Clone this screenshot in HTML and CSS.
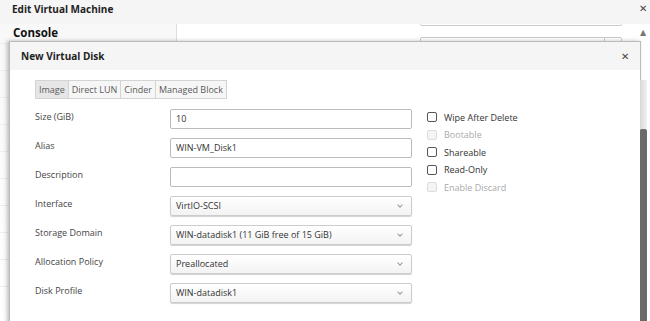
FILE: index.html
```html
<!DOCTYPE html>
<html lang="en">

<head>
    <meta charset="UTF-8">
    <title>New Virtual Disk</title>
    <link rel="stylesheet" href="styles.css">
</head>

<body>
    <div class="vm-dialog">
        <div class="vm-header">
            <span class="vm-title">Edit Virtual Machine</span>
            <span class="close">&#x2715;</span>
        </div>
        <div class="vm-body">
            <div class="vm-nav">
                <div class="nav-item">Console</div>
                <div class="nav-row"></div>
                <div class="nav-row"></div>
                <div class="nav-row"></div>
                <div class="nav-row"></div>
                <div class="nav-row"></div>
                <div class="nav-row"></div>
                <div class="nav-row"></div>
                <div class="nav-row"></div>
                <div class="nav-row"></div>
            </div>
            <div class="vm-content">
                <div class="bg-field"></div>
                <div class="bg-select"><span class="bg-btn"></span></div>
            </div>
            <div class="scrollbar">
                <span class="scroll-arrow">&#x25B2;</span>
                <div class="scroll-track"></div>
                <div class="scroll-thumb"></div>
            </div>
        </div>
    </div>

    <!-- dialog on top -->
    <div class="disk-dialog">
        <div class="disk-header">
            <span class="disk-title">New Virtual Disk</span>
            <span class="close">&#x2715;</span>
        </div>
        <div class="disk-body">
            <div class="tabs">
                <span class="tab active">Image</span>
                <span class="tab">Direct LUN</span>
                <span class="tab">Cinder</span>
                <span class="tab">Managed Block</span>
            </div>
            <div class="form">
                <div class="fields">
                    <div class="row">
                        <label>Size (GiB)</label>
                        <div class="input">10</div>
                    </div>
                    <div class="row">
                        <label>Alias</label>
                        <div class="input">WIN-VM_Disk1</div>
                    </div>
                    <div class="row">
                        <label>Description</label>
                        <div class="input"></div>
                    </div>
                    <div class="row">
                        <label>Interface</label>
                        <div class="select">VirtIO-SCSI<span class="chev"></span></div>
                    </div>
                    <div class="row">
                        <label>Storage Domain</label>
                        <div class="select">WIN-datadisk1 (11 GiB free of 15 GiB)<span class="chev"></span></div>
                    </div>
                    <div class="row">
                        <label>Allocation Policy</label>
                        <div class="select">Preallocated<span class="chev"></span></div>
                    </div>
                    <div class="row">
                        <label>Disk Profile</label>
                        <div class="select">WIN-datadisk1<span class="chev"></span></div>
                    </div>
                </div>
                <div class="checks">
                    <div class="check"><span class="box"></span>Wipe After Delete</div>
                    <div class="check disabled"><span class="box"></span>Bootable</div>
                    <div class="check"><span class="box"></span>Shareable</div>
                    <div class="check"><span class="box"></span>Read-Only</div>
                    <div class="check disabled"><span class="box"></span>Enable Discard</div>
                </div>
            </div>
        </div>
    </div>
</body>

</html>
```

FILE: styles.css
```css
body {
    margin: 0;
    padding: 0;
    width: 650px;
    height: 321px;
    overflow: hidden;
    position: relative;
    font-family: 'Open Sans', 'Liberation Sans', sans-serif;
    color: #363636;
    background-color: #fff;
}

.vm-dialog {
    display: flex;
    flex-direction: column;
    height: 321px;
}

.vm-header {
    height: 24px;
    padding: 0 3px 0 12px;
    background-color: #f5f5f5;
    display: flex;
    justify-content: space-between;
    align-items: flex-start;
}

.vm-title {
    font-size: 10px;
    font-weight: bold;
    color: #222;
    line-height: 18px;
}

.close {
    font-size: 10px;
    color: #444;
    line-height: 17px;
}

.vm-body {
    flex: 1;
    display: flex;
    position: relative;
}

.vm-nav {
    width: 176px;
    flex-shrink: 0;
    border-right: 1px solid #ddd;
    background: linear-gradient(#f8f8f8, #ffffff);
}

.nav-item {
    font-size: 11.5px;
    font-weight: bold;
    color: #111;
    padding: 0 0 0 13px;
    height: 19px;
    line-height: 17px;
    border-bottom: 1px solid #eee;
}

.nav-row {
    height: 26px;
    border-bottom: 1px solid #eee;
}

.vm-content {
    flex: 1;
    padding: 0 0 0 243px;
}

.bg-field {
    width: 200px;
    height: 1px;
    border: 1px solid #ccc;
    border-top: none;
    border-radius: 0 0 2px 2px;
}

.bg-select {
    margin-top: 11px;
    width: 200px;
    height: 20px;
    border: 1px solid #ccc;
    border-radius: 2px;
    position: relative;
}

.bg-btn {
    position: absolute;
    right: 16px;
    top: 0;
    height: 20px;
    border-left: 1px solid #ccc;
}

/* scrollbar of the dialog behind */
.scrollbar {
    position: absolute;
    right: 2px;
    top: 0;
    bottom: 0;
    width: 10px;
    display: flex;
    flex-direction: column;
    align-items: center;
    z-index: 2;
}

.scroll-arrow {
    font-family: 'DejaVu Sans', sans-serif;
    font-size: 8px;
    line-height: 8px;
    height: 8px;
    margin-top: 5px;
    color: #777;
    flex-shrink: 0;
}

.scroll-track {
    margin-top: 43px;
    width: 7px;
    height: 49px;
    flex-shrink: 0;
    background: linear-gradient(to right, #d8d8d8, #f2f2f2);
}

.scroll-thumb {
    width: 7px;
    flex: 1;
    background-color: #6a6a6a;
    border-radius: 2px 2px 0 0;
}

.disk-dialog {
    position: absolute;
    left: 9px;
    top: 41px;
    width: 630px;
    height: 300px;
    background-color: #fff;
    border: 1px solid #bbb;
    box-shadow: -2px 0 4px rgba(0, 0, 0, 0.25);
    z-index: 1;
}

.disk-header {
    height: 28px;
    padding: 0 11px 0 11px;
    background-color: #f5f5f5;
    display: flex;
    justify-content: space-between;
    align-items: center;
}

.disk-title {
    font-size: 10px;
    font-weight: bold;
    color: #222;
}

.disk-body {
    padding: 10px 0 0 25px;
}

.tabs {
    display: flex;
    height: 17px;
    border: 1px solid #d4d4d4;
    width: fit-content;
}

.tab {
    font-size: 9px;
    color: #5a5a5a;
    padding: 0 3px;
    line-height: 17px;
    background-color: #f6f6f6;
    border-left: 1px solid #d4d4d4;
}

.tab:first-child {
    border-left: none;
}

.tab.active {
    background-color: #e6e6e6;
}

.form {
    display: flex;
    margin-top: 10px;
}

.fields {
    display: flex;
    flex-direction: column;
    gap: 9px;
}

.row {
    display: flex;
    height: 20px;
}

.row label {
    width: 135px;
    font-size: 9px;
    color: #444;
    line-height: 16px;
}

.input {
    width: 235px;
    height: 18px;
    border: 1px solid #bbb;
    border-radius: 2px;
    padding: 0 0 0 5px;
    font-size: 9px;
    line-height: 18px;
    color: #333;
}

.select {
    width: 235px;
    height: 18px;
    border: 1px solid #ccc;
    border-radius: 2px;
    padding: 0 0 0 5px;
    font-size: 9px;
    font-weight: 500;
    line-height: 18px;
    color: #333;
    background: linear-gradient(#fff, #f3f3f3);
    box-shadow: 0 1px 1px rgba(0, 0, 0, 0.18);
    position: relative;
}

.chev {
    position: absolute;
    right: 9px;
    top: 6px;
    width: 3px;
    height: 3px;
    border-right: 1px solid #999;
    border-bottom: 1px solid #999;
    transform: rotate(45deg);
}

.checks {
    margin-left: 15px;
    display: flex;
    flex-direction: column;
    gap: 5px;
    padding-top: 2px;
}

.check {
    display: flex;
    align-items: center;
    font-size: 9px;
    color: #333;
    height: 12.5px;
}

.box {
    width: 8px;
    height: 8px;
    border: 1px solid #555;
    border-radius: 2px;
    margin-right: 7px;
}

.check.disabled {
    color: #aaa;
}

.check.disabled .box {
    border-color: #ddd;
    background-color: #f4f4f4;
}
```
